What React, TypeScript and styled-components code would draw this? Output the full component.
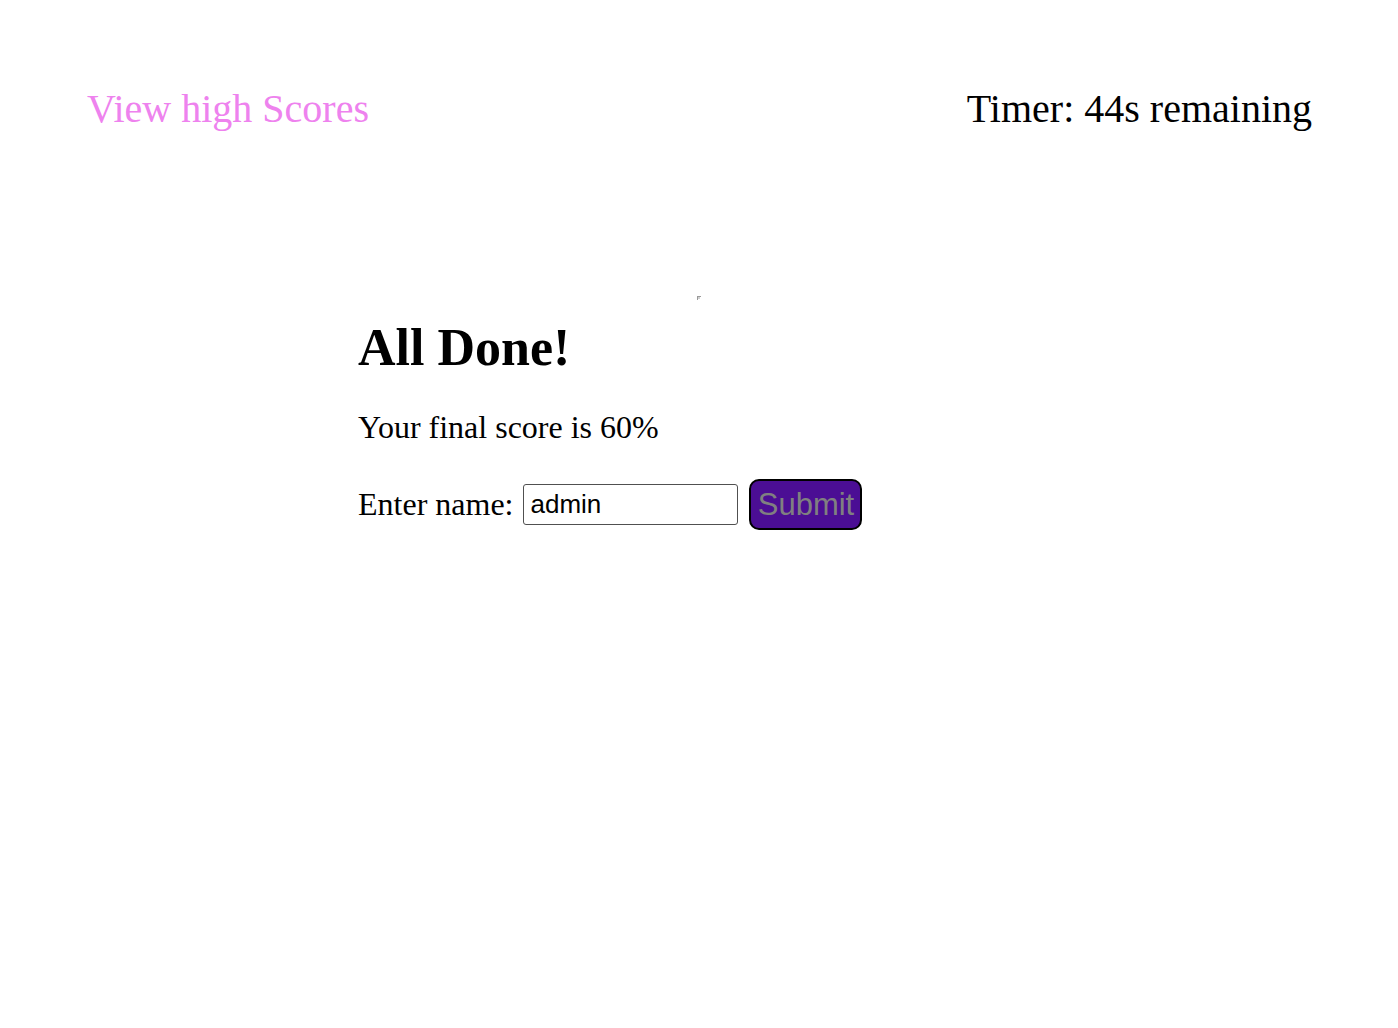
import React from "react";
import styled, { createGlobalStyle } from "styled-components";

const Global = createGlobalStyle`
  html, body { margin: 0; padding: 0; background: #ffffff; }
  body { font-family: "Liberation Serif", "Times New Roman", serif; color: #000; }
`;

const Header = styled.header`
  display: flex;
  justify-content: space-between;
  align-items: center;
  padding: 86px 86px 0 87px;
  font-size: 40px;
  line-height: 46px;
`;

const HighScores = styled.a`
  color: #ee82ee;
  text-decoration: none;
  cursor: pointer;
`;

const Timer = styled.div`
  color: #000;
`;

const Main = styled.main`
  width: 682px;
  margin: 0 auto;
  padding-top: 164px;
  display: flex;
  flex-direction: column;
  align-items: flex-start;
`;

const Broken = styled.svg`
  align-self: center;
  display: block;
  width: 4px;
  height: 4px;
`;

const Title = styled.h1`
  margin: 18px 0 0 0;
  font-size: 52px;
  line-height: 60px;
  font-weight: bold;
`;

const Score = styled.p`
  margin: 31px 0 0 0;
  font-size: 32px;
  line-height: 37px;
`;

const Form = styled.form`
  margin-top: 33px;
  display: flex;
  align-items: center;
`;

const Label = styled.label`
  font-size: 32px;
  line-height: 37px;
  margin-right: 10px;
`;

const Input = styled.input`
  box-sizing: border-box;
  width: 215px;
  height: 41px;
  border: 1px solid #505050;
  border-radius: 3px;
  padding: 0 6px;
  font-family: "Liberation Sans", Arial, sans-serif;
  font-size: 26px;
  color: #000;
  outline: none;
`;

const Submit = styled.button`
  box-sizing: border-box;
  margin-left: 11px;
  width: 113px;
  height: 51px;
  padding: 0 4px;
  background: #4b0e94;
  border: 2px solid #000;
  border-radius: 10px;
  color: #808080;
  font-family: "Liberation Sans", Arial, sans-serif;
  font-size: 31px;
  line-height: 1;
  cursor: pointer;
`;

export default function App() {
  return (
    <>
      <Global />
      <Header>
        <HighScores>View high Scores</HighScores>
        <Timer>Timer: 44s remaining</Timer>
      </Header>
      <Main>
        <Broken viewBox="0 0 4 4">
          <rect x="0" y="0" width="4" height="1" fill="#9a9a9a" />
          <rect x="0" y="0" width="1" height="4" fill="#9a9a9a" />
          <rect x="1" y="1" width="2" height="2" fill="#d0d0d0" />
        </Broken>
        <Title>All Done!</Title>
        <Score>Your final score is 60%</Score>
        <Form onSubmit={(e) => e.preventDefault()}>
          <Label htmlFor="name">Enter name:</Label>
          <Input id="name" defaultValue="admin" />
          <Submit type="submit">Submit</Submit>
        </Form>
      </Main>
    </>
  );
}
